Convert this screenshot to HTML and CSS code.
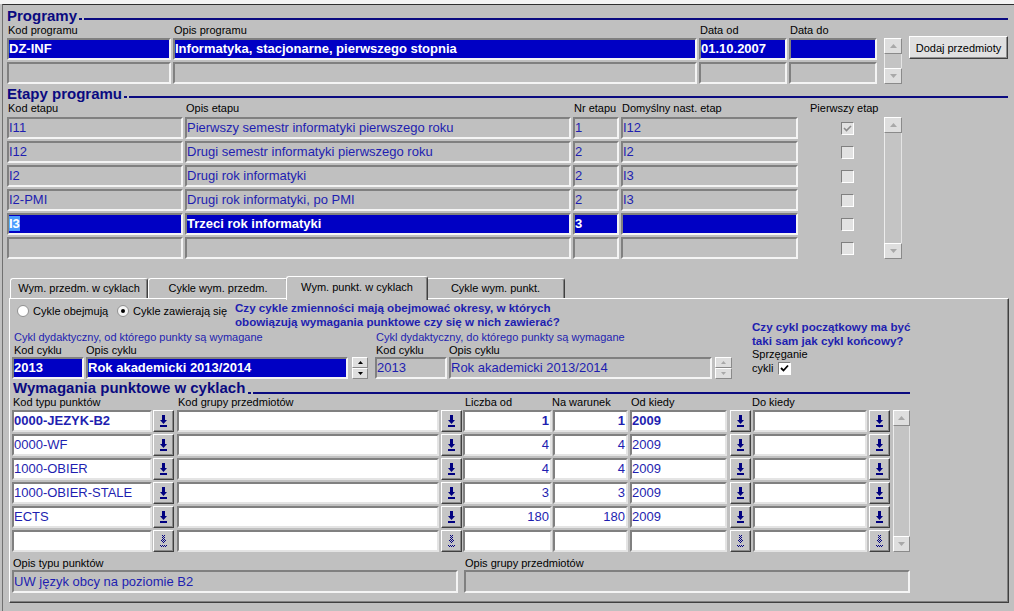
FILE: index.html
```html
<!DOCTYPE html>
<html lang="pl">
<head>
<meta charset="utf-8">
<title>Programy</title>
<link rel="stylesheet" href="styles.css">
</head>
<body>
<div class="win"><div class="frame">
<svg class="defs" width="0" height="0"><defs><pattern id="dith" width="2" height="2" patternUnits="userSpaceOnUse"><rect width="1" height="1" fill="#000080"/><rect x="1" y="1" width="1" height="1" fill="#000080"/></pattern></defs></svg>

<section class="sec prog">
  <div class="ttl-row t-prog"><span class="ttl">Programy</span><span class="rule"></span></div>
  <div class="body-row">
    <div class="grid g-prog">
      <span class="lbl">Kod programu</span><span class="lbl">Opis programu</span><span class="lbl">Data od</span><span class="lbl">Data do</span>
      <div class="field sel">DZ-INF</div><div class="field sel">Informatyka, stacjonarne, pierwszego stopnia</div><div class="field sel">01.10.2007</div><div class="field sel"></div>
      <div class="field"></div><div class="field"></div><div class="field"></div><div class="field"></div>
    </div>
    <div class="sb sb-prog"><span class="sbb"><svg width="7" height="4" viewBox="0 0 7 4"><path d="M3.5 0L7 4H0z" fill="#a8a8a8"/></svg></span><span class="sbt"></span><span class="sbb"><svg width="7" height="4" viewBox="0 0 7 4"><path d="M0 0h7L3.5 4z" fill="#a8a8a8"/></svg></span></div>
    <button class="btn btn-add" type="button">Dodaj przedmioty</button>
  </div>
</section>

<section class="sec etapy">
  <div class="ttl-row t-et"><span class="ttl">Etapy programu</span><span class="rule"></span></div>
  <div class="body-row">
    <div class="grid g-et">
      <span class="lbl">Kod etapu</span><span class="lbl">Opis etapu</span><span class="lbl">Nr etapu</span><span class="lbl">Domyślny nast. etap</span><span class="lbl lbl-pe">Pierwszy etap</span>
      <div class="field">I11</div><div class="field">Pierwszy semestr informatyki pierwszego roku</div><div class="field">1</div><div class="field">I12</div><span class="cbx"><svg width="11" height="11" viewBox="0 0 11 11"><path d="M2 5l2.5 2.5L9 3" stroke="#8c8c8c" stroke-width="1.6" fill="none"/></svg></span>
      <div class="field">I12</div><div class="field">Drugi semestr informatyki pierwszego roku</div><div class="field">2</div><div class="field">I2</div><span class="cbx"></span>
      <div class="field">I2</div><div class="field">Drugi rok informatyki</div><div class="field">2</div><div class="field">I3</div><span class="cbx"></span>
      <div class="field">I2-PMI</div><div class="field">Drugi rok informatyki, po PMI</div><div class="field">2</div><div class="field">I3</div><span class="cbx"></span>
      <div class="field sel"><span class="hl">I3</span></div><div class="field sel">Trzeci rok informatyki</div><div class="field sel">3</div><div class="field sel"></div><span class="cbx"></span>
      <div class="field"></div><div class="field"></div><div class="field"></div><div class="field"></div><span class="cbx"></span>
    </div>
    <div class="sb sb-et"><span class="sbb"><svg width="7" height="4" viewBox="0 0 7 4"><path d="M3.5 0L7 4H0z" fill="#a8a8a8"/></svg></span><span class="sbt"></span><span class="sbb"><svg width="7" height="4" viewBox="0 0 7 4"><path d="M0 0h7L3.5 4z" fill="#a8a8a8"/></svg></span></div>
  </div>
</section>

<div class="tabs">
  <div class="tab t1">Wym. przedm. w cyklach</div>
  <div class="tab t2">Cykle wym. przedm.</div>
  <div class="tab t3 on">Wym. punkt. w cyklach</div>
  <div class="tab t4">Cykle wym. punkt.</div>
</div>

<div class="panel">
  <div class="ptop">
    <div class="pl">
      <div class="rrow">
        <label class="radio r1"><svg width="12" height="12" viewBox="0 0 12 12"><circle cx="6" cy="6" r="5.5" fill="#fff" stroke="#909090"/></svg>Cykle obejmują</label>
        <label class="radio r2"><svg width="12" height="12" viewBox="0 0 12 12"><circle cx="6" cy="6" r="5.5" fill="#f4f4f4" stroke="#909090"/><circle cx="6" cy="6" r="2" fill="#000"/></svg>Cykle zawierają się</label>
        <div class="q">Czy cykle zmienności mają obejmować okresy, w których<br>obowiązują wymagania punktowe czy się w nich zawierać?</div>
      </div>
      <div class="crow">
        <div class="cgrp cg-l">
          <div class="chead">Cykl dydaktyczny, od którego punkty są wymagane</div>
          <div class="clbls"><span class="lbl ck">Kod cyklu</span><span class="lbl">Opis cyklu</span></div>
          <div class="cflds">
            <div class="field sel fk">2013</div>
            <div class="field sel fo">Rok akademicki 2013/2014</div>
            <div class="spin"><span class="sbb"><svg width="5" height="3" viewBox="0 0 5 3"><path d="M2.5 0L5 3H0z" fill="#000"/></svg></span><span class="sbb"><svg width="5" height="3" viewBox="0 0 5 3"><path d="M0 0h5L2.5 3z" fill="#000"/></svg></span></div>
          </div>
        </div>
        <div class="cgrp cg-r">
          <div class="chead">Cykl dydaktyczny, do którego punkty są wymagane</div>
          <div class="clbls"><span class="lbl ck">Kod cyklu</span><span class="lbl">Opis cyklu</span></div>
          <div class="cflds">
            <div class="field fk">2013</div>
            <div class="field fo">Rok akademicki 2013/2014</div>
            <div class="spin"><span class="sbb"><svg width="5" height="3" viewBox="0 0 5 3"><path d="M2.5 0L5 3H0z" fill="#a8a8a8"/></svg></span><span class="sbb"><svg width="5" height="3" viewBox="0 0 5 3"><path d="M0 0h5L2.5 3z" fill="#a8a8a8"/></svg></span></div>
          </div>
        </div>
      </div>
    </div>
    <div class="pr">
      <div class="q">Czy cykl początkowy ma być<br>taki sam jak cykl końcowy?</div>
      <div class="lbl">Sprzęganie</div>
      <div class="cyk"><span class="lbl">cykli</span><span class="cbx2"><svg width="11" height="11" viewBox="0 0 11 11"><path d="M2 5l2.5 2.5L9 2.5" stroke="#000" stroke-width="1.8" fill="none"/></svg></span></div>
    </div>
  </div>

  <div class="ttl-row t-w"><span class="ttl">Wymagania punktowe w cyklach</span><span class="rule"></span></div>
  <div class="wlbls"><span class="lbl">Kod typu punktów</span><span class="lbl">Kod grupy przedmiotów</span><span class="lbl">Liczba od</span><span class="lbl">Na warunek</span><span class="lbl">Od kiedy</span><span class="lbl">Do kiedy</span></div>
  <div class="wbody">
    <div class="wrows">
      <div class="wrow">
        <div class="field w b">0000-JEZYK-B2</div><span class="lb"><svg width="7" height="12" viewBox="0 0 7 12"><path d="M2 0h3v5h2L3.5 9 0 5h2zM0 10h7v2H0z" fill="#000080"/></svg></span>
        <div class="field w"></div><span class="lb"><svg width="7" height="12" viewBox="0 0 7 12"><path d="M2 0h3v5h2L3.5 9 0 5h2zM0 10h7v2H0z" fill="#000080"/></svg></span>
        <div class="field w b num">1</div><div class="field w b num">1</div><div class="field w b">2009</div><span class="lb"><svg width="7" height="12" viewBox="0 0 7 12"><path d="M2 0h3v5h2L3.5 9 0 5h2zM0 10h7v2H0z" fill="#000080"/></svg></span>
        <div class="field w"></div><span class="lb"><svg width="7" height="12" viewBox="0 0 7 12"><path d="M2 0h3v5h2L3.5 9 0 5h2zM0 10h7v2H0z" fill="#000080"/></svg></span>
      </div>
      <div class="wrow">
        <div class="field w">0000-WF</div><span class="lb"><svg width="7" height="12" viewBox="0 0 7 12"><path d="M2 0h3v5h2L3.5 9 0 5h2zM0 10h7v2H0z" fill="#000080"/></svg></span>
        <div class="field w"></div><span class="lb"><svg width="7" height="12" viewBox="0 0 7 12"><path d="M2 0h3v5h2L3.5 9 0 5h2zM0 10h7v2H0z" fill="#000080"/></svg></span>
        <div class="field w num">4</div><div class="field w num">4</div><div class="field w">2009</div><span class="lb"><svg width="7" height="12" viewBox="0 0 7 12"><path d="M2 0h3v5h2L3.5 9 0 5h2zM0 10h7v2H0z" fill="#000080"/></svg></span>
        <div class="field w"></div><span class="lb"><svg width="7" height="12" viewBox="0 0 7 12"><path d="M2 0h3v5h2L3.5 9 0 5h2zM0 10h7v2H0z" fill="#000080"/></svg></span>
      </div>
      <div class="wrow">
        <div class="field w">1000-OBIER</div><span class="lb"><svg width="7" height="12" viewBox="0 0 7 12"><path d="M2 0h3v5h2L3.5 9 0 5h2zM0 10h7v2H0z" fill="#000080"/></svg></span>
        <div class="field w"></div><span class="lb"><svg width="7" height="12" viewBox="0 0 7 12"><path d="M2 0h3v5h2L3.5 9 0 5h2zM0 10h7v2H0z" fill="#000080"/></svg></span>
        <div class="field w num">4</div><div class="field w num">4</div><div class="field w">2009</div><span class="lb"><svg width="7" height="12" viewBox="0 0 7 12"><path d="M2 0h3v5h2L3.5 9 0 5h2zM0 10h7v2H0z" fill="#000080"/></svg></span>
        <div class="field w"></div><span class="lb"><svg width="7" height="12" viewBox="0 0 7 12"><path d="M2 0h3v5h2L3.5 9 0 5h2zM0 10h7v2H0z" fill="#000080"/></svg></span>
      </div>
      <div class="wrow">
        <div class="field w">1000-OBIER-STALE</div><span class="lb"><svg width="7" height="12" viewBox="0 0 7 12"><path d="M2 0h3v5h2L3.5 9 0 5h2zM0 10h7v2H0z" fill="#000080"/></svg></span>
        <div class="field w"></div><span class="lb"><svg width="7" height="12" viewBox="0 0 7 12"><path d="M2 0h3v5h2L3.5 9 0 5h2zM0 10h7v2H0z" fill="#000080"/></svg></span>
        <div class="field w num">3</div><div class="field w num">3</div><div class="field w">2009</div><span class="lb"><svg width="7" height="12" viewBox="0 0 7 12"><path d="M2 0h3v5h2L3.5 9 0 5h2zM0 10h7v2H0z" fill="#000080"/></svg></span>
        <div class="field w"></div><span class="lb"><svg width="7" height="12" viewBox="0 0 7 12"><path d="M2 0h3v5h2L3.5 9 0 5h2zM0 10h7v2H0z" fill="#000080"/></svg></span>
      </div>
      <div class="wrow">
        <div class="field w">ECTS</div><span class="lb"><svg width="7" height="12" viewBox="0 0 7 12"><path d="M2 0h3v5h2L3.5 9 0 5h2zM0 10h7v2H0z" fill="#000080"/></svg></span>
        <div class="field w"></div><span class="lb"><svg width="7" height="12" viewBox="0 0 7 12"><path d="M2 0h3v5h2L3.5 9 0 5h2zM0 10h7v2H0z" fill="#000080"/></svg></span>
        <div class="field w num">180</div><div class="field w num">180</div><div class="field w">2009</div><span class="lb"><svg width="7" height="12" viewBox="0 0 7 12"><path d="M2 0h3v5h2L3.5 9 0 5h2zM0 10h7v2H0z" fill="#000080"/></svg></span>
        <div class="field w"></div><span class="lb"><svg width="7" height="12" viewBox="0 0 7 12"><path d="M2 0h3v5h2L3.5 9 0 5h2zM0 10h7v2H0z" fill="#000080"/></svg></span>
      </div>
      <div class="wrow">
        <div class="field w"></div><span class="lb"><svg width="7" height="12" viewBox="0 0 7 12"><path d="M2 0h3v5h2L3.5 9 0 5h2zM0 10h7v2H0z" fill="url(#dith)"/></svg></span>
        <div class="field w"></div><span class="lb"><svg width="7" height="12" viewBox="0 0 7 12"><path d="M2 0h3v5h2L3.5 9 0 5h2zM0 10h7v2H0z" fill="url(#dith)"/></svg></span>
        <div class="field w num"></div><div class="field w num"></div><div class="field w"></div><span class="lb"><svg width="7" height="12" viewBox="0 0 7 12"><path d="M2 0h3v5h2L3.5 9 0 5h2zM0 10h7v2H0z" fill="url(#dith)"/></svg></span>
        <div class="field w"></div><span class="lb"><svg width="7" height="12" viewBox="0 0 7 12"><path d="M2 0h3v5h2L3.5 9 0 5h2zM0 10h7v2H0z" fill="url(#dith)"/></svg></span>
      </div>
    </div>
    <div class="sb sb-w"><span class="sbb"><svg width="7" height="4" viewBox="0 0 7 4"><path d="M3.5 0L7 4H0z" fill="#a8a8a8"/></svg></span><span class="sbt"></span><span class="sbb"><svg width="7" height="4" viewBox="0 0 7 4"><path d="M0 0h7L3.5 4z" fill="#a8a8a8"/></svg></span></div>
  </div>
  <div class="wbot">
    <div class="bg1"><div class="lbl">Opis typu punktów</div><div class="field fb">UW język obcy na poziomie B2</div></div>
    <div class="bg2"><div class="lbl">Opis grupy przedmiotów</div><div class="field fb"></div></div>
  </div>
</div>

</div></div>
</body>
</html>
```

FILE: styles.css
```css
body { margin: 0; }

.win {
  width: 1014px;
  height: 611px;
  box-sizing: border-box;
  background: #c0c0c0;
  border-top: 4px solid #f4f4f4;
  font-family: "Liberation Sans", Arial, sans-serif;
  overflow: hidden;
}
.frame {
  height: 100%;
  box-sizing: border-box;
  margin-left: 2px;
  border-top: 1px solid #303030;
  border-left: 1px solid #707070;
}
.defs { display: block; width: 0; height: 0; overflow: hidden; }

.lbl {
  font-size: 11px;
  line-height: 13px;
  color: #000;
  white-space: nowrap;
}

/* section titles */
.ttl-row { display: flex; align-items: flex-end; height: 16px; }
.ttl { font-size: 15px; font-weight: bold; line-height: 16px; color: #0a0a80; white-space: nowrap; }
.rule {
  flex: 1;
  height: 2px;
  margin: 0 0 4px 2px;
  background: linear-gradient(to right, #0a0a80 0 3px, transparent 3px 5px, #0a0a80 5px);
}
.sec { margin-left: 4px; }
.t-prog { margin-top: 3px; margin-right: 6px; }
.t-et { margin-top: 2px; margin-right: 6px; }

.body-row { display: flex; align-items: flex-start; }
.grid { display: grid; gap: 2px; }
.grid > .lbl { padding-left: 1px; }

/* fields */
.field {
  box-sizing: border-box;
  height: 22px;
  border: 2px solid;
  border-color: #808080 #f4f4f4 #f4f4f4 #808080;
  background: #c0c0c0;
  font-size: 13px;
  line-height: 18px;
  color: #1e1eb0;
  white-space: nowrap;
  overflow: hidden;
  padding: 0 1px 0 0;
}
.field.sel { background: #0000c4; color: #fff; font-weight: bold; }
.field.w { background: #fff; border-color: #808080 #e4e4e4 #e4e4e4 #808080; }
.field.b { font-weight: bold; }
.field.num { text-align: right; }
.hl { background: #4a9cff; color: #fff; }

/* programy */
.g-prog { grid-template-columns: 164px 524px 88px 88px; grid-template-rows: 12px 22px 22px; }
.sb-prog { margin: 14px 0 0 7px; width: 18px; height: 46px; }
.btn {
  box-sizing: border-box;
  font-family: "Liberation Sans", Arial, sans-serif;
  font-size: 11px;
  color: #000;
  background: #e0e0e0;
  border: 1px solid;
  border-color: #fff #404040 #404040 #fff;
  box-shadow: inset -1px -1px #909090;
  padding: 0;
}
.btn-add { margin: 12px 0 0 7px; width: 99px; height: 23px; }

/* scrollbars */
.sb { display: flex; flex-direction: column; box-sizing: border-box; }
.sbb {
  box-sizing: border-box;
  height: 16px;
  flex: none;
  background: #dedede;
  border: 1px solid;
  border-color: #fff #8a8a8a #8a8a8a #fff;
  display: flex;
  align-items: center;
  justify-content: center;
}
.sbb svg { display: block; }
.sbt {
  flex: 1;
  background: #c4c4c4;
  border-left: 1px solid #ececec;
  border-right: 1px solid #e4e4e4;
}

/* etapy */
.g-et { grid-template-columns: 176px 386px 46px 177px 84px; grid-template-rows: 13px repeat(6, 22px); }
.g-et > .lbl-pe { padding-left: 10px; }
.cbx {
  justify-self: start;
  align-self: start;
  box-sizing: border-box;
  width: 13px;
  height: 13px;
  margin: 5px 0 0 41px;
  border: 1px solid;
  border-color: #808080 #fff #fff #808080;
  background: #e2e2e2;
  display: flex;
  align-items: center;
  justify-content: center;
}
.sb-et { margin-top: 15px; width: 18px; height: 142px; }

/* tabs */
.tabs { display: flex; align-items: flex-end; height: 22px; margin: 17px 0 0 7px; }
.tab {
  box-sizing: border-box;
  height: 20px;
  background: #c0c0c0;
  border: 1px solid;
  border-color: #fff #404040 transparent #fff;
  border-bottom: none;
  border-radius: 3px 3px 0 0;
  box-shadow: inset -1px 0 #808080;
  font-size: 11px;
  line-height: 18px;
  text-align: center;
  color: #000;
  white-space: nowrap;
}
.t1 { width: 138px; }
.t2 { width: 140px; }
.t3 { width: 142px; }
.t4 { width: 139px; }
.tab.on {
  height: 24px;
  margin: 0 -2px -2px;
  line-height: 21px;
  position: relative;
  z-index: 1;
}

/* panel */
.panel {
  margin-left: 6px;
  width: 1000px;
  height: 305px;
  box-sizing: border-box;
  border-top: 1px solid #fff;
  border-left: 1px solid #fff;
  border-right: 1px solid #404040;
  border-bottom: 1px solid #404040;
  box-shadow: inset -1px -1px #808080;
}
.ptop { display: flex; }
.pl { width: 742px; flex: none; }
.rrow { display: flex; margin-top: 2px; height: 28px; }
.radio { display: flex; align-items: center; height: 20px; font-size: 11px; color: #000; white-space: nowrap; }
.radio svg { margin-right: 4px; flex: none; }
.r1 { margin-left: 7px; width: 100px; }
.r2 { width: 118px; }
.q { font-size: 11.6px; font-weight: bold; line-height: 14px; color: #1e1eb0; white-space: nowrap; }

.crow { display: flex; margin-top: 2px; }
.cg-l { margin-left: 2px; }
.cg-r { margin-left: 7px; }
.chead { font-size: 11px; line-height: 13px; color: #1e1eb0; white-space: nowrap; padding-left: 2px; }
.cg-r .chead { padding-left: 1px; }
.clbls { display: flex; }
.clbls .ck { width: 72px; padding-left: 2px; }
.cg-r .clbls .ck { width: 73px; padding-left: 1px; }
.cflds { display: flex; }
.fk { width: 72px; margin-right: 2px; }
.cg-l .fo { width: 262px; margin-right: 4px; }
.cg-r .fo { width: 263px; margin-right: 3px; }
.spin { display: flex; flex-direction: column; width: 16px; height: 22px; }
.cg-r .spin { width: 17px; }
.spin .sbb { height: 11px; }

.pr { margin-top: 21px; }
.cyk { display: flex; align-items: center; height: 15px; }
.cbx2 {
  box-sizing: border-box;
  width: 13px;
  height: 13px;
  margin-left: 5px;
  border: 1px solid;
  border-color: #808080 #fff #fff #808080;
  background: #fff;
  display: flex;
  align-items: center;
  justify-content: center;
}

/* wymagania */
.t-w { margin: 1px 0 0 3px; width: 897px; }
.t-w .rule { margin-bottom: 2px; margin-left: 3px; }
.wlbls { display: flex; margin-left: 3px; }
.wlbls > :nth-child(1) { width: 165px; }
.wlbls > :nth-child(2) { width: 287px; }
.wlbls > :nth-child(3) { width: 87px; }
.wlbls > :nth-child(4) { width: 79px; }
.wlbls > :nth-child(5) { width: 121px; }
.wbody { display: flex; margin: 1px 0 0 2px; }
.wrows { display: grid; grid-template-rows: repeat(6, 22px); row-gap: 2px; }
.wrow { display: flex; }
.wrow > :nth-child(1) { width: 140px; margin-right: 1px; }
.wrow > :nth-child(2) { margin-right: 3px; }
.wrow > :nth-child(3) { width: 262px; margin-right: 2px; }
.wrow > :nth-child(4) { margin-right: 1px; }
.wrow > :nth-child(5) { width: 89px; margin-right: 1px; }
.wrow > :nth-child(6) { width: 75px; margin-right: 2px; }
.wrow > :nth-child(7) { width: 97px; margin-right: 3px; }
.wrow > :nth-child(8) { margin-right: 2px; }
.wrow > :nth-child(9) { width: 114px; margin-right: 2px; }
.lb {
  box-sizing: border-box;
  width: 21px;
  height: 22px;
  flex: none;
  background: #c6c6c6;
  border: 1px solid;
  border-color: #fff #404040 #404040 #fff;
  box-shadow: inset -1px -1px #8a8a8a;
  display: flex;
  align-items: center;
  justify-content: center;
}
.lb svg { display: block; }
.sb-w { margin-left: 3px; width: 17px; height: 142px; }

.wbot { display: flex; margin-top: 5px; }
.bg1 { margin-left: 2px; width: 446px; }
.bg2 { margin-left: 6px; width: 446px; }
.wbot .lbl { padding-left: 1px; }
.fb { height: 23px; line-height: 19px; }
```
